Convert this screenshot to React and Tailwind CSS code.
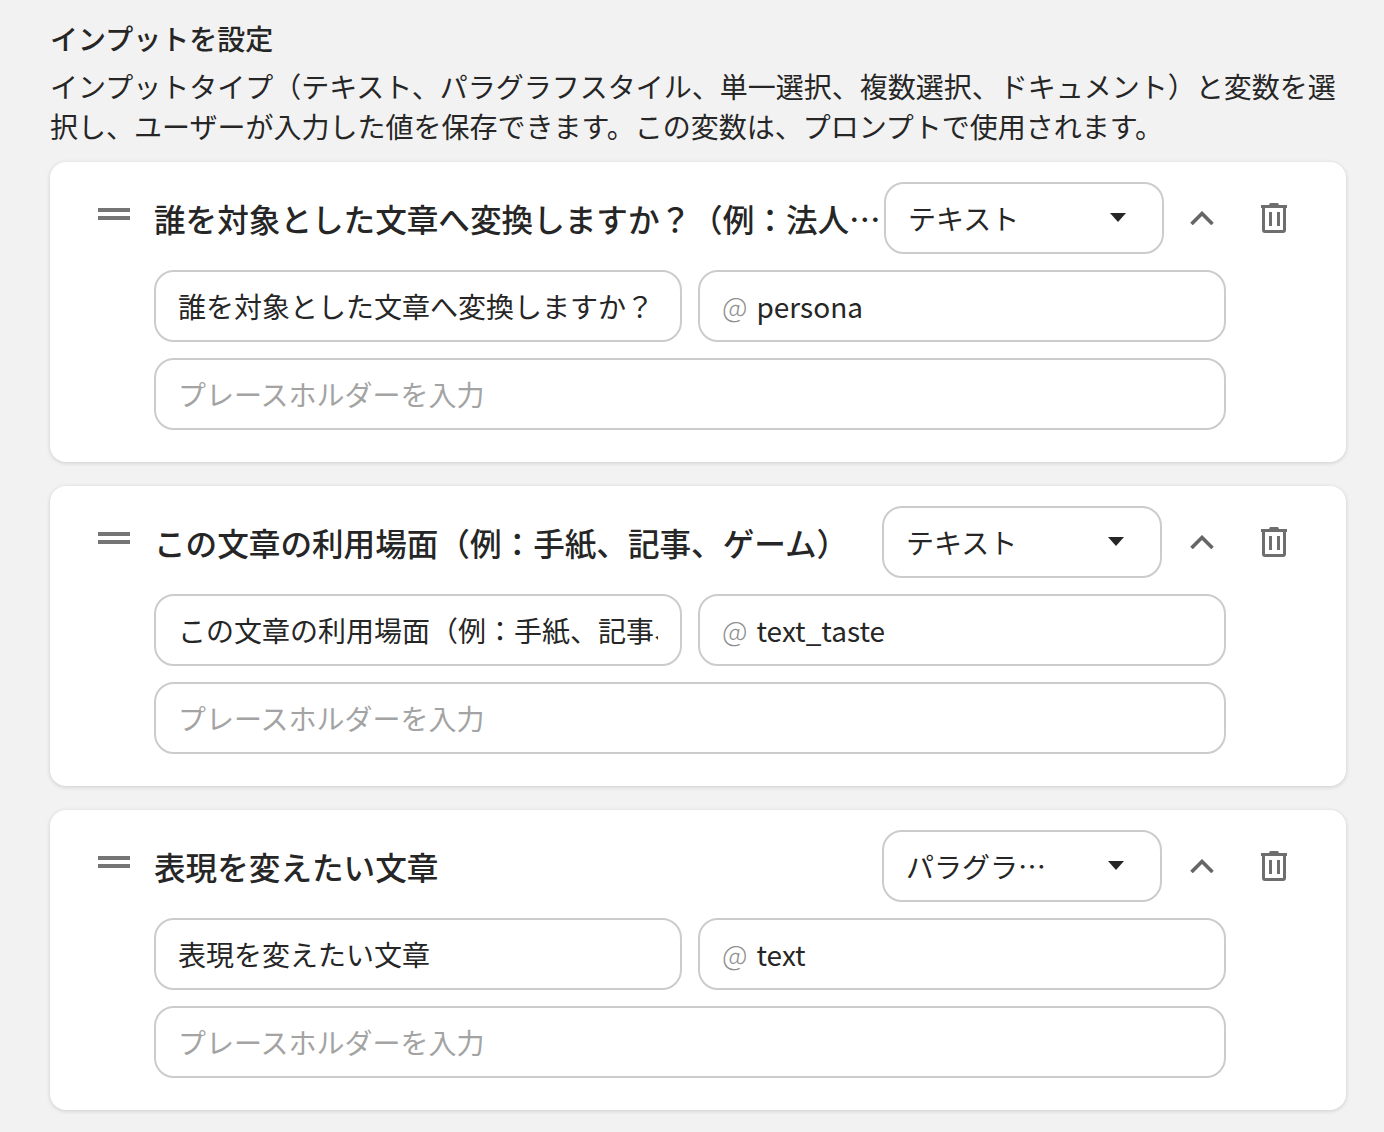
function Grip() {
  return (
    <svg width="32" height="12" viewBox="0 0 32 12" className="shrink-0 block">
      <rect x="0" y="0" width="32" height="4" fill="#757575" />
      <rect x="0" y="8" width="32" height="4" fill="#757575" />
    </svg>
  );
}

function Chevron() {
  return (
    <svg width="24" height="14" viewBox="0 0 24 14" className="block">
      <path d="M1.5 13 L12 2.5 L22.5 13" fill="none" stroke="#666666" strokeWidth="3.6" />
    </svg>
  );
}

function Trash() {
  return (
    <svg width="26" height="30" viewBox="0 0 26 30" className="block">
      <path d="M8 2 L9 0 H17 L18 2 H26 V5 H0 V2 Z" fill="#6e6e6e" />
      <path d="M2.5 5 V27 Q2.5 28.5 4 28.5 H22 Q23.5 28.5 23.5 27 V5" fill="none" stroke="#6e6e6e" strokeWidth="3" />
      <rect x="8" y="9" width="3" height="14" fill="#6e6e6e" />
      <rect x="16" y="9" width="3" height="14" fill="#6e6e6e" />
    </svg>
  );
}

function Card({ title, type, label, name, titleClass, actionClass }) {
  return (
    <div className="w-[1296px] h-[300px] rounded-[16px] bg-white shadow-[0_1px_4px_rgba(0,0,0,0.16)] pt-[20px] pl-[48px]">
      <div className="flex items-center h-[72px]">
        <div className="w-[32px] shrink-0 mb-[8px]"><Grip /></div>
        <div className={`${titleClass} ml-[24px] truncate text-[31.6px] font-medium text-[#262626] leading-[44px]`}>{title}</div>
        <div className="w-[280px] h-[72px] shrink-0 rounded-[20px] border-2 border-[#cccccc] flex items-center pl-[22px]">
          <span className="w-[146px] truncate text-[28px] text-[#262626]">{type}</span>
          <svg width="16" height="9" viewBox="0 0 16 9" className="block ml-[56px] mb-[1px]"><path d="M0 0 H16 L8 9 Z" fill="#262626" /></svg>
        </div>
        <div className={`${actionClass} shrink-0 flex justify-center`}><Chevron /></div>
        <div className="w-[64px] shrink-0 flex justify-center"><Trash /></div>
      </div>
      <div className="ml-[56px] mt-[16px] w-[1072px] flex gap-[16px]">
        <div className="w-[528px] h-[72px] rounded-[20px] border-2 border-[#cccccc] px-[22px] flex items-center text-[28px] text-[#262626]">
          <span className="block w-full overflow-hidden whitespace-nowrap">{label}</span>
        </div>
        <div className="w-[528px] h-[72px] rounded-[20px] border-2 border-[#cccccc] px-[22px] flex items-center text-[#262626]">
          <span className="text-[28px] text-[#8f8f8f] mr-[9px] font-light">@</span>
          <span className="text-[28px]">{name}</span>
        </div>
      </div>
      <div className="ml-[56px] mt-[16px] w-[1072px] h-[72px] rounded-[20px] border-2 border-[#cccccc] px-[22px] flex items-center text-[28px] text-[#a3a3a3]">
        プレースホルダーを入力
      </div>
    </div>
  );
}

export default function App() {
  return (
    <div className="w-[1384px] h-[1132px] overflow-hidden bg-[#f2f2f2] pt-[18px] pl-[50px] font-['Noto_Sans_CJK_JP','Noto_Sans',sans-serif]">
      <div className="text-[28px] font-medium leading-[40px] text-[#262626]">インプットを設定</div>
      <p className="w-[1296px] mt-[8px] text-[28px] leading-[40px] text-[#262626]">
        インプットタイプ（テキスト、パラグラフスタイル、単一選択、複数選択、ドキュメント）と変数を選択し、ユーザーが入力した値を保存できます。この変数は、プロンプトで使用されます。
      </p>
      <div className="mt-[16px] flex flex-col gap-[24px]">
        <Card title="誰を対象とした文章へ変換しますか？（例：法人向けの文書）" type="テキスト" label="誰を対象とした文章へ変換しますか？" name="persona" titleClass="w-[730px]" actionClass="w-[76px] mr-[2px]" />
        <Card title="この文章の利用場面（例：手紙、記事、ゲーム）" type="テキスト" label="この文章の利用場面（例：手紙、記事、ゲーム）" name="text_taste" titleClass="w-[728px]" actionClass="w-[80px]" />
        <Card title="表現を変えたい文章" type="パラグラフスタイル" label="表現を変えたい文章" name="text" titleClass="w-[728px]" actionClass="w-[80px]" />
      </div>
    </div>
  );
}
